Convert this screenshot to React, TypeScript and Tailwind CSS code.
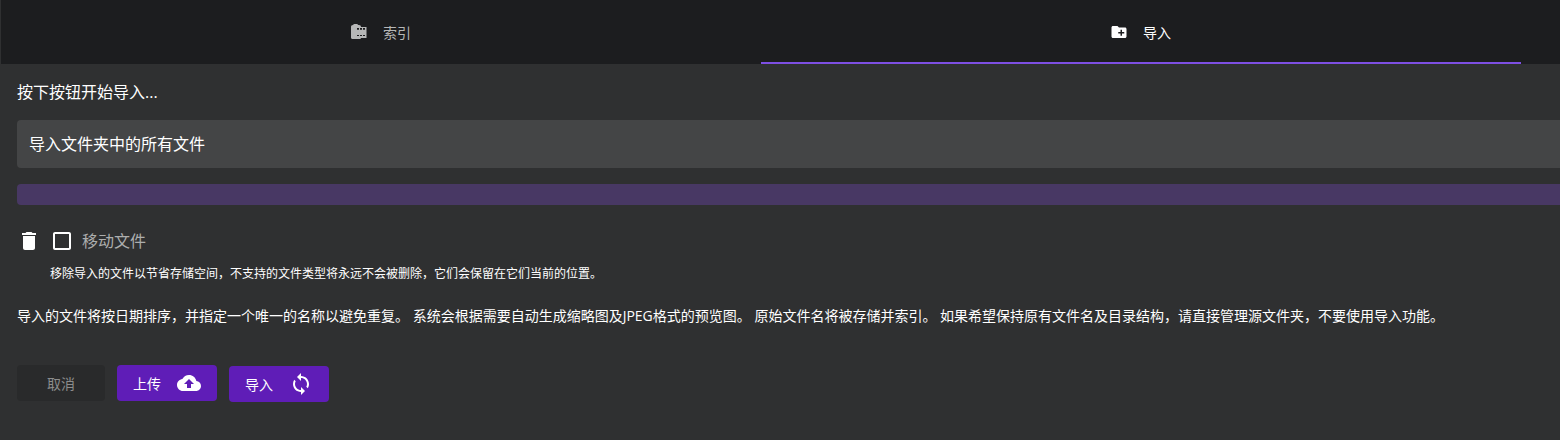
import type { ReactNode } from "react";

const paths = {
  roll: "M14.670 5.330C14.670 4 13.800 2.670 12 2.670h-1c-.5-.9-1.200-1.340-2-1.340H6c-.8 0-1.500.440-2 1.340-1.800 0-2.670 1-2.670 2.660v14c0 1.330.870 2 2.200 2h9c1.200 0 2.140-.5 2.140-1.330H22V5.330zM12 17.330H9.330V16H12zM12 9H9.330V6.670H12zM16 17.330h-2.670V16H16zM16 9h-2.670V6.670H16zM20 17.330h-2.670V16H20zM20 9h-2.670V6.670H20z",
  newFolder: "M20 6h-8l-2-2H4c-1.11 0-1.99.89-1.99 2L2 18c0 1.11.89 2 2 2h16c1.11 0 2-.89 2-2V8c0-1.11-.89-2-2-2zm-1 8h-3v3h-2v-3h-3v-2h3V9h2v3h3v2z",
  trash: "M6 19c0 1.1.9 2 2 2h8c1.1 0 2-.9 2-2V7H6v12zM19 4h-3.500l-1-1h-5l-1 1H5v2h14V4z",
  box: "M19 5v14H5V5h14m0-2H5c-1.100 0-2 .9-2 2v14c0 1.100.9 2 2 2h14c1.100 0 2-.9 2-2V5c0-1.100-.9-2-2-2z",
  upload: "M19.350 10.040C18.670 6.590 15.640 4 12 4 9.110 4 6.600 5.640 5.350 8.040 2.340 8.360 0 10.910 0 14c0 3.310 2.690 6 6 6h13c2.760 0 5-2.240 5-5 0-2.640-2.050-4.780-4.650-4.960zM14 13v4h-4v-4H7l5-5 5 5h-3z",
  sync: "M12 4V1L8 5l4 4V6c3.310 0 6 2.690 6 6 0 1.010-.25 1.970-.7 2.800l1.460 1.460C19.540 15.030 20 13.570 20 12c0-4.420-3.580-8-8-8zm0 14c-3.310 0-6-2.690-6-6 0-1.010.25-1.970.7-2.800L5.240 7.740C4.460 8.970 4 10.430 4 12c0 4.420 3.580 8 8 8v3l4-4-4-4v3z",
};

function Icon({ name, className }: { name: keyof typeof paths; className: string }) {
  return (
    <svg viewBox="0 0 24 24" fill="currentColor" className={"shrink-0 " + className}>
      <path d={paths[name]} />
    </svg>
  );
}

function Tab({ icon, active, children }: { icon: keyof typeof paths; active?: boolean; children: ReactNode }) {
  return (
    <div
      className={
        "flex h-16 w-[760px] shrink-0 items-center justify-center border-b-2 pr-px pt-0.5 text-sm " +
        (active ? "border-[#7e4fe3] text-white" : "border-transparent text-[#b6b7b7]")
      }
    >
      <Icon name={icon} className="mr-[15px] size-[18px]" />
      <span className="pt-0.5">{children}</span>
    </div>
  );
}

export default function App() {
  return (
    <div className="h-[440px] w-full overflow-hidden bg-[#2f3031] font-['Open_Sans','Noto_Sans_CJK_SC',sans-serif] text-white">
      <nav className="ml-px flex h-16 bg-[#1c1d1f]">
        <Tab icon="roll">索引</Tab>
        <Tab icon="newFolder" active>导入</Tab>
      </nav>
      <main className="pl-[17px]">
        <p className="h-14 pt-4 text-base leading-6">按下按钮开始导入...</p>
        <div className="flex h-12 items-center rounded-l bg-[#444546] pl-3 text-base">导入文件夹中的所有文件</div>
        <div className="mt-4 h-[21px] rounded-l bg-[#483864]" />
        <div className="mt-6 flex h-6 items-center">
          <Icon name="trash" className="size-6" />
          <Icon name="box" className="ml-[9px] size-6" />
          <span className="ml-2 text-base leading-6 text-[#acadad]">移动文件</span>
        </div>
        <p className="mt-[13px] pl-[33px] text-xs leading-4">
          移除导入的文件以节省存储空间，不支持的文件类型将永远不会被删除，它们会保留在它们当前的位置。
        </p>
        <p className="mt-[23px] whitespace-nowrap text-sm leading-[21px]">
          导入的文件将按日期排序，并指定一个唯一的名称以避免重复。 系统会根据需要自动生成缩略图及JPEG格式的预览图。 原始文件名将被存储并索引。 如果希望保持原有文件名及目录结构，请直接管理源文件夹，不要使用导入功能。
        </p>
        <div className="mt-[39px] flex items-start gap-3 text-sm">
          <button className="h-9 w-[88px] rounded bg-[#292a2b] pt-0.5 text-[#8c8d8d]">取消</button>
          <button className="flex h-9 w-[100px] items-center rounded bg-[#5f1db7] pl-4">
            <span className="pt-0.5">上传</span>
            <Icon name="upload" className="ml-4 size-6" />
          </button>
          <button className="mt-px flex h-9 w-[100px] items-center rounded bg-[#5f1db7] pl-4">
            <span className="pt-px">导入</span>
            <Icon name="sync" className="ml-4 size-6" />
          </button>
        </div>
      </main>
    </div>
  );
}
